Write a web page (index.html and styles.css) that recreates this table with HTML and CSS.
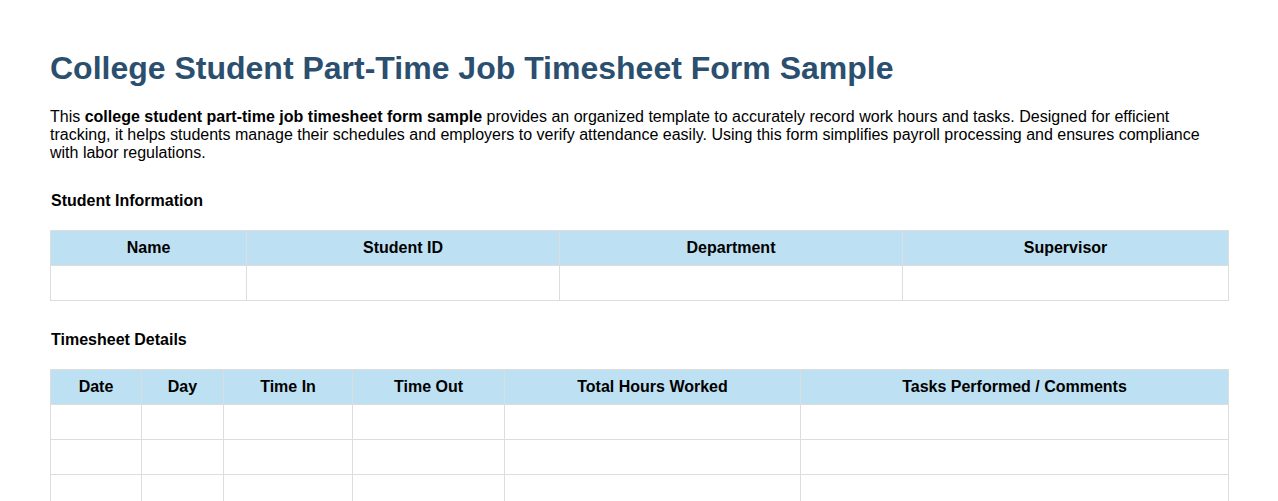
FILE: index.html
```html
<!DOCTYPE html>
<html lang="en">
<head>
<meta charset="utf-8">
<title>College Student Part-Time Job Timesheet Form Sample</title>
<link rel="stylesheet" href="styles.css">
</head>
<body>
<main class="page">
  <h1 class="title">College Student Part-Time Job Timesheet Form Sample</h1>
  <p class="intro">This <strong>college student part-time job timesheet form sample</strong> provides an organized template to accurately record work hours and tasks. Designed for efficient tracking, it helps students manage their schedules and employers to verify attendance easily. Using this form simplifies payroll processing and ensures compliance with labor regulations.</p>

  <h2 class="section-title">Student Information</h2>
  <table class="grid">
    <colgroup>
      <col class="c-name"><col class="c-id"><col class="c-dept"><col class="c-sup">
    </colgroup>
    <thead>
      <tr><th>Name</th><th>Student ID</th><th>Department</th><th>Supervisor</th></tr>
    </thead>
    <tbody>
      <tr><td></td><td></td><td></td><td></td></tr>
    </tbody>
  </table>

  <h2 class="section-title">Timesheet Details</h2>
  <table class="grid">
    <colgroup>
      <col class="c-date"><col class="c-day"><col class="c-in"><col class="c-out"><col class="c-total"><col class="c-tasks">
    </colgroup>
    <thead>
      <tr><th>Date</th><th>Day</th><th>Time In</th><th>Time Out</th><th>Total Hours Worked</th><th>Tasks Performed / Comments</th></tr>
    </thead>
    <tbody>
      <tr><td></td><td></td><td></td><td></td><td></td><td></td></tr>
      <tr><td></td><td></td><td></td><td></td><td></td><td></td></tr>
      <tr><td></td><td></td><td></td><td></td><td></td><td></td></tr>
      <tr><td></td><td></td><td></td><td></td><td></td><td></td></tr>
    </tbody>
  </table>
</main>
</body>
</html>
```

FILE: styles.css
```css
html, body {
  margin: 0;
  padding: 0;
  background: #ffffff;
}
body {
  font-family: "Liberation Sans", Arial, sans-serif;
  font-size: 16px;
  color: #000000;
}
.page {
  padding: 40px 50px;
}
.title {
  margin: 10px 0 21px;
  font-size: 32px;
  font-weight: bold;
  color: #2b4f6f;
  line-height: 37px;
}
.intro {
  margin: 0 0 30px;
  line-height: 18px;
}
.section-title {
  margin: 0 0 20px 1px;
  font-size: 16px;
  font-weight: bold;
  line-height: 18px;
}
.grid {
  width: calc(100% - 1px);
  border-collapse: collapse;
  table-layout: fixed;
  margin-bottom: 30px;
}
.grid th, .grid td {
  border: 1px solid #dddddd;
  height: 35px;
  padding: 0 8px;
  text-align: center;
  box-sizing: border-box;
}
.grid th {
  background: #bde0f2;
  font-weight: bold;
  font-size: 16px;
}
.c-name { width: 196px; }
.c-id { width: 313px; }
.c-dept { width: 343px; }
.c-sup { width: 326px; }
.c-date { width: 91px; }
.c-day { width: 82px; }
.c-in { width: 129px; }
.c-out { width: 152px; }
.c-total { width: 296px; }
.c-tasks { width: 428px; }
```
